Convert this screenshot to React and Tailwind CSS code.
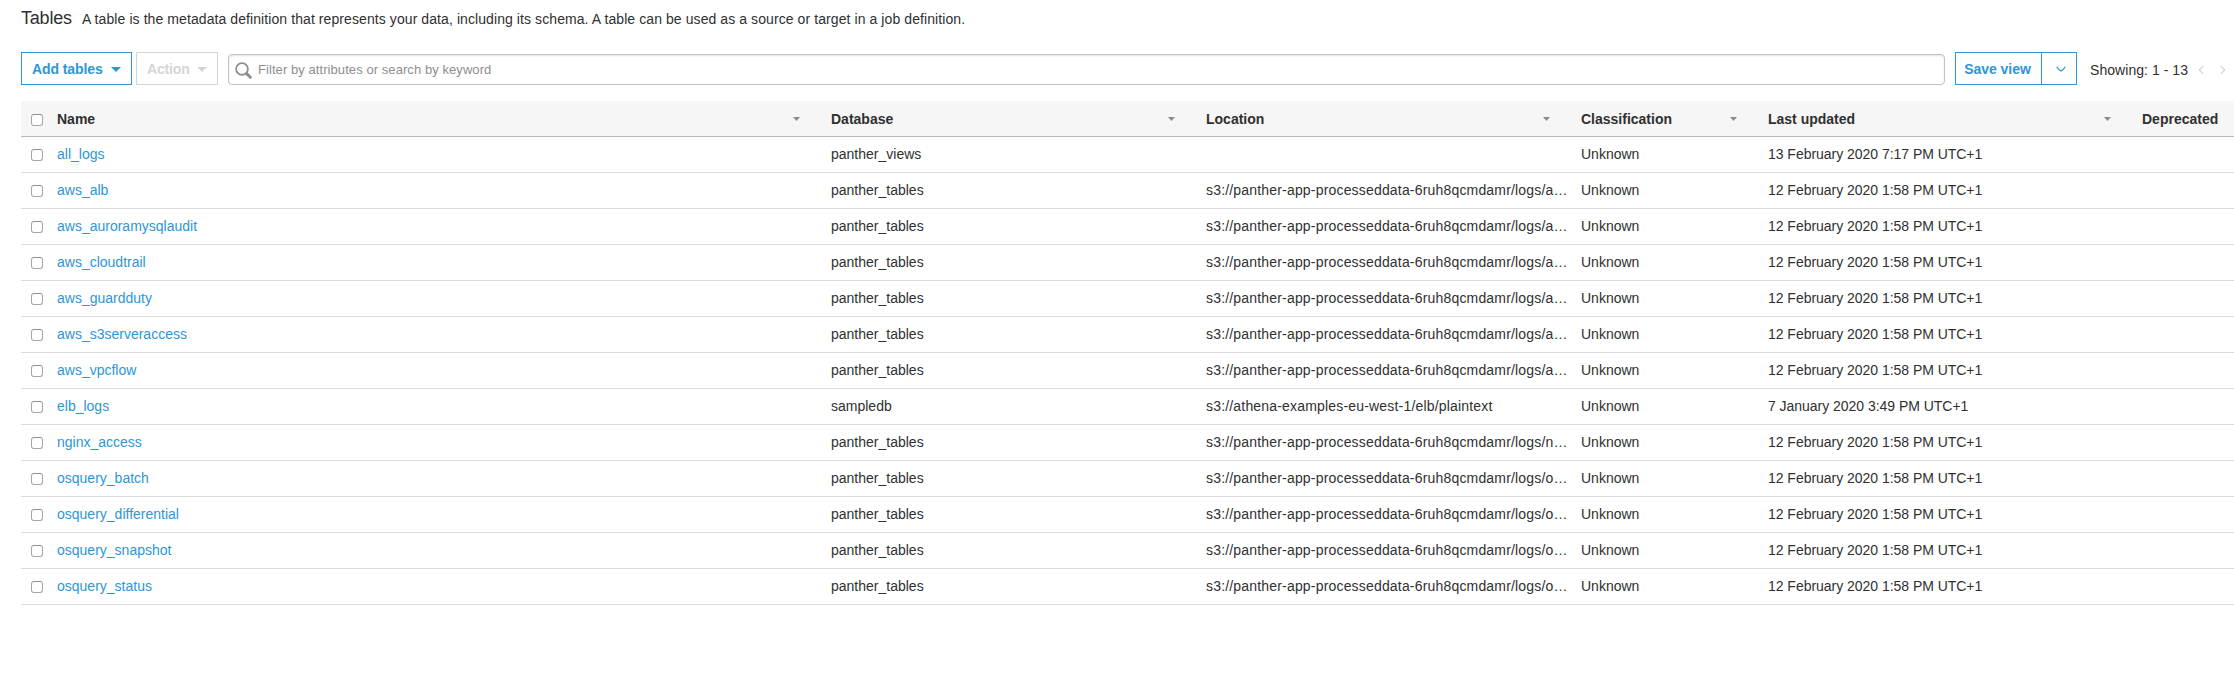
import React from "react";

const P = "s3://panther-app-processeddata-6ruh8qcmdamr/logs/";
const FEB12 = "12 February 2020 1:58 PM UTC+1";
const T = "panther_tables";

const rows = [
  ["all_logs", "panther_views", "", "13 February 2020 7:17 PM UTC+1"],
  ["aws_alb", T, P + "a…", FEB12],
  ["aws_auroramysqlaudit", T, P + "a…", FEB12],
  ["aws_cloudtrail", T, P + "a…", FEB12],
  ["aws_guardduty", T, P + "a…", FEB12],
  ["aws_s3serveraccess", T, P + "a…", FEB12],
  ["aws_vpcflow", T, P + "a…", FEB12],
  ["elb_logs", "sampledb", "s3://athena-examples-eu-west-1/elb/plaintext", "7 January 2020 3:49 PM UTC+1"],
  ["nginx_access", T, P + "n…", FEB12],
  ["osquery_batch", T, P + "o…", FEB12],
  ["osquery_differential", T, P + "o…", FEB12],
  ["osquery_snapshot", T, P + "o…", FEB12],
  ["osquery_status", T, P + "o…", FEB12],
];

const GRID = "grid grid-cols-[26px_774px_375px_375px_187px_374px_102px]";

function Caret({ className }) {
  return (
    <svg viewBox="0 0 10 6" preserveAspectRatio="none" className={className} fill="currentColor">
      <path d="M0 0h10L5 6z" />
    </svg>
  );
}

function Checkbox({ className }) {
  return (
    <span className={"flex items-start pl-[10px] " + className}>
      <span className="h-3 w-3 rounded-[3px] border border-[#a6a6a6] border-t-[#8f8f8f] bg-white" />
    </span>
  );
}

function HeaderCell({ children, caret = true }) {
  return (
    <div className="flex items-center justify-between pl-[10px] pr-[21px] font-bold">
      <span>{children}</span>
      {caret && <Caret className="mt-px h-1 w-[7px] shrink-0 text-[#8c8c8c]" />}
    </div>
  );
}

function Cell({ children, className = "" }) {
  return <div className={"whitespace-nowrap pl-[10px] leading-[35px] " + className}>{children}</div>;
}

function Pager({ d }) {
  return (
    <svg viewBox="0 0 6 10" className="h-[10px] w-[6px] shrink-0" fill="none" stroke="#cfcfcf" strokeWidth="1.1">
      <path d={d} />
    </svg>
  );
}

export default function App() {
  return (
    <div className="h-[697px] w-[2234px] overflow-hidden bg-white pl-[21px] font-['Liberation_Sans',Arial,sans-serif] text-sm text-[#2f3030]">
      <header className="flex h-[52px] items-baseline gap-[10px] whitespace-nowrap pt-[6px]">
        <h1 className="w-[51px] text-[18px] leading-6 tracking-[-0.2px]">Tables</h1>
        <p className="tracking-[0.084px]">
          A table is the metadata definition that represents your data, including its schema. A table can be used as a
          source or target in a job definition.
        </p>
      </header>

      <div className="flex h-[49px] items-start whitespace-nowrap">
        <button className="flex h-[33px] w-[111px] items-center justify-between border border-[#2d96d6] pl-[10px] pr-[10px] font-bold tracking-[-0.08px] text-[#2d96d6]">
          <span>Add tables</span>
          <Caret className="mt-[2px] h-[5px] w-[10px]" />
        </button>
        <button className="ml-1 flex h-[33px] w-[82px] items-center justify-between border border-[#d5d5d5] pl-[10px] pr-[10px] font-bold tracking-[-0.15px] text-[#d5d5d5]">
          <span>Action</span>
          <Caret className="mt-[2px] h-[5px] w-[10px]" />
        </button>
        <div className="ml-[10px] mt-[2px] flex h-[31px] w-[1717px] items-center rounded-[4px] border border-[#c4c4c4] pl-[6px] text-[13px] text-[#8e8e8e] shadow-[inset_0_1px_2px_rgba(0,0,0,0.12)]">
          <svg viewBox="0 0 17 17" className="mt-px h-[17px] w-[17px] shrink-0" fill="none" stroke="#8e8e8e">
            <circle cx="7" cy="7" r="5.9" strokeWidth="1.8" />
            <path d="M11.6 11.6l3.7 3.7" strokeWidth="3" strokeLinecap="round" />
          </svg>
          <span className="ml-[6px] pt-[2px] tracking-[0.07px]">Filter by attributes or search by keyword</span>
        </div>
        <div className="ml-[10px] flex h-[33px] w-[122px] border border-[#2d96d6] text-[#2d96d6]">
          <button className="w-[86px] border-r border-[#2d96d6] pr-[2px] font-bold tracking-[-0.05px]">Save view</button>
          <button className="flex flex-1 items-center justify-center pl-[3px]">
            <svg viewBox="0 0 10 6" className="h-[6px] w-[10px]" fill="none" stroke="currentColor" strokeWidth="1.2">
              <path d="M0.8 0.8Q3 4.6 5 4.8Q7 4.6 9.2 0.8" />
            </svg>
          </button>
        </div>
        <div className="ml-[13px] flex h-[35px] items-center">
          <span className="w-[108px] tracking-[0.05px]">Showing: 1 - 13</span>
          <Pager d="M5.3 1.2L1 5l4.3 3.8" />
          <span className="w-4" />
          <Pager d="M0.7 1.2L5 5 0.7 8.8" />
        </div>
      </div>

      <div className={GRID + " h-9 border-b border-[#b7b7b7] bg-[#f6f6f6]"}>
        <Checkbox className="pt-[13px]" />
        <HeaderCell>Name</HeaderCell>
        <HeaderCell>Database</HeaderCell>
        <HeaderCell>Location</HeaderCell>
        <HeaderCell>Classification</HeaderCell>
        <HeaderCell>Last updated</HeaderCell>
        <HeaderCell caret={false}>Deprecated</HeaderCell>
      </div>
      {rows.map(([name, db, loc, date]) => (
        <div key={name} className={GRID + " h-9 border-b border-[#dcdcdc]"}>
          <Checkbox className="pt-3" />
          <Cell className="text-[#2d96d6]">{name}</Cell>
          <Cell>{db}</Cell>
          <Cell className="tracking-[0.18px]">{loc}</Cell>
          <Cell>Unknown</Cell>
          <Cell className="tracking-[-0.03px]">{date}</Cell>
        </div>
      ))}
    </div>
  );
}
